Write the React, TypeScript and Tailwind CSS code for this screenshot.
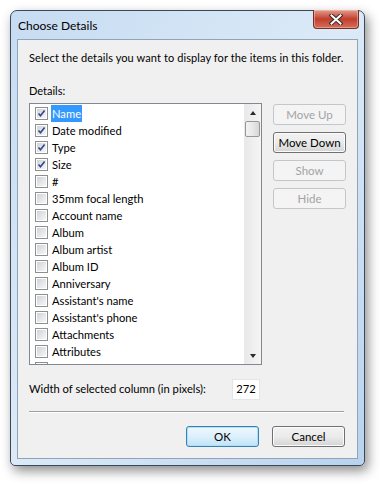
import React from 'react';

const FONT = "font-['Lato','Liberation_Sans',sans-serif]";

const items = [
  { label: 'Name', checked: true },
  { label: 'Date modified', checked: true },
  { label: 'Type', checked: true },
  { label: 'Size', checked: true },
  { label: '#', checked: false },
  { label: '35mm focal length', checked: false },
  { label: 'Account name', checked: false },
  { label: 'Album', checked: false },
  { label: 'Album artist', checked: false },
  { label: 'Album ID', checked: false },
  { label: 'Anniversary', checked: false },
  { label: "Assistant's name", checked: false },
  { label: "Assistant's phone", checked: false },
  { label: 'Attachments', checked: false },
  { label: 'Attributes', checked: false },
  { label: '', checked: false },
];

function CheckBox({ checked }: { checked: boolean }) {
  return (
    <div className="w-[13px] h-[13px] shrink-0 border border-[#8f8f8f] bg-white p-px">
      <div className="relative w-full h-full bg-gradient-to-br from-[#cfd3d9] to-[#f7f7f7]">
        {checked && (
          <svg className="absolute inset-0" width="9" height="9" viewBox="0 0 9 9">
            <path d="M1.5 4.5 L3.5 6.8 L7.6 1.6" fill="none" stroke="#31498b" strokeWidth="1.6" />
          </svg>
        )}
      </div>
    </div>
  );
}

function Button({ label, disabled, primary }: { label: string; disabled?: boolean; primary?: boolean }) {
  const look = disabled
    ? 'border-[#c4c7ca] bg-[#f4f4f4] text-[#a3a3a3]'
    : primary
      ? 'border-[#3c7fb1] bg-gradient-to-b from-[#edf7fd] via-[#dcf0fb] to-[#c0e3f7] text-black shadow-[inset_0_0_0_1px_#aee0fa]'
      : 'border-[#707070] bg-gradient-to-b from-[#f2f2f2] via-[#ebebeb] to-[#d4d4d4] text-black shadow-[inset_0_0_0_1px_#fcfcfc]';
  return (
    <div className={`w-[73px] h-[21px] rounded-[3px] border flex items-center justify-center text-[11.5px] ${look}`}>
      {label}
    </div>
  );
}

export default function App() {
  return (
    <div className={`w-[383px] h-[484px] bg-white pt-[10px] pl-[10px] ${FONT}`}>
      <div className="w-[355px] h-[456px] rounded-t-[7px] rounded-b-[5px] border border-[#39485c] bg-gradient-to-br from-[#c6dcf2] via-[#dceaf7] to-[#b9d3ee] shadow-[3px_5px_12px_rgba(0,0,0,0.45)] flex flex-col">
        <div className="h-[28px] flex items-start justify-between pl-[7px] pr-[5px]">
          <span className="mt-[6px] text-[12px] text-black">Choose Details</span>
          <div className="w-[46px] h-[19px] -mt-px rounded-b-[4px] border border-[#6e3029] border-t-0 bg-gradient-to-b from-[#e39b8d] via-[#c13d2b] to-[#d46e58] flex items-center justify-center shadow-[inset_0_0_0_1px_rgba(255,210,200,0.45)]">
            <svg width="14" height="11" viewBox="0 0 14 11">
              <path d="M2.5 1.5 L11.5 9.5 M11.5 1.5 L2.5 9.5" stroke="#3a2a2a" strokeWidth="4" strokeLinecap="square" />
              <path d="M2.5 1.5 L11.5 9.5 M11.5 1.5 L2.5 9.5" stroke="#ffffff" strokeWidth="2" strokeLinecap="square" />
            </svg>
          </div>
        </div>
        <div className="mx-[6px] w-[341px] h-[420px] border border-[#8fa3bb] bg-[#f0f0f0] px-[11px] text-[11px] text-black flex flex-col whitespace-nowrap">
          <div className="mt-[10px] h-[16px] leading-[16px] tracking-[0.1px]">
            Select the details you want to display for the items in this folder.
          </div>
          <div className="mt-[17px] h-[16px] leading-[16px]">Details:</div>
          <div className="mt-[4px] flex gap-[11px]">
            <div className="w-[233px] h-[262px] border border-[#828790] bg-white flex overflow-hidden">
              <div className="flex-1 pt-px overflow-hidden text-[11.2px]">
                {items.map((it, i) => (
                  <div key={i} className="h-[17px] flex items-center pl-[5px]">
                    <CheckBox checked={it.checked} />
                    {it.label && (
                      <span
                        className={`ml-[3px] px-px h-[17px] leading-[17px] ${i === 0 ? 'bg-[#3399ff] text-white' : ''}`}>
                        {it.label}
                      </span>
                    )}
                  </div>
                ))}
              </div>
              <div className="w-[17px] h-full bg-gradient-to-r from-[#e8e8e8] to-[#f5f5f5] flex flex-col items-center">
                <div className="h-[17px] flex items-center justify-center">
                  <div className="w-0 h-0 border-x-[3.5px] border-x-transparent border-b-[4px] border-b-[#2a2a2a]" />
                </div>
                <div className="w-[15px] h-[16px] rounded-[2px] border border-[#979797] bg-gradient-to-r from-[#f3f3f3] via-[#e8e8e8] to-[#d6d6d6]" />
                <div className="flex-1" />
                <div className="h-[17px] flex items-center justify-center">
                  <div className="w-0 h-0 border-x-[3.5px] border-x-transparent border-t-[4px] border-t-[#2a2a2a]" />
                </div>
              </div>
            </div>
            <div className="flex flex-col gap-[7px] pt-px">
              <Button label="Move Up" disabled />
              <Button label="Move Down" />
              <Button label="Show" disabled />
              <Button label="Hide" disabled />
            </div>
          </div>
          <div className="mt-[14px] flex items-center text-[11.2px]">
            <span className="w-[203px]">Width of selected column (in pixels):</span>
            <div className="w-[28px] h-[21px] bg-white border border-[#e2e6ea] flex items-center justify-center">
              272
            </div>
          </div>
          <div className="mt-[11px] w-[315px] h-px bg-[#a0a0a0] border-b border-white box-content" />
          <div className="mt-[13px] flex justify-end gap-[13px] pr-[1px]">
            <Button label="OK" primary />
            <Button label="Cancel" />
          </div>
        </div>
      </div>
    </div>
  );
}
